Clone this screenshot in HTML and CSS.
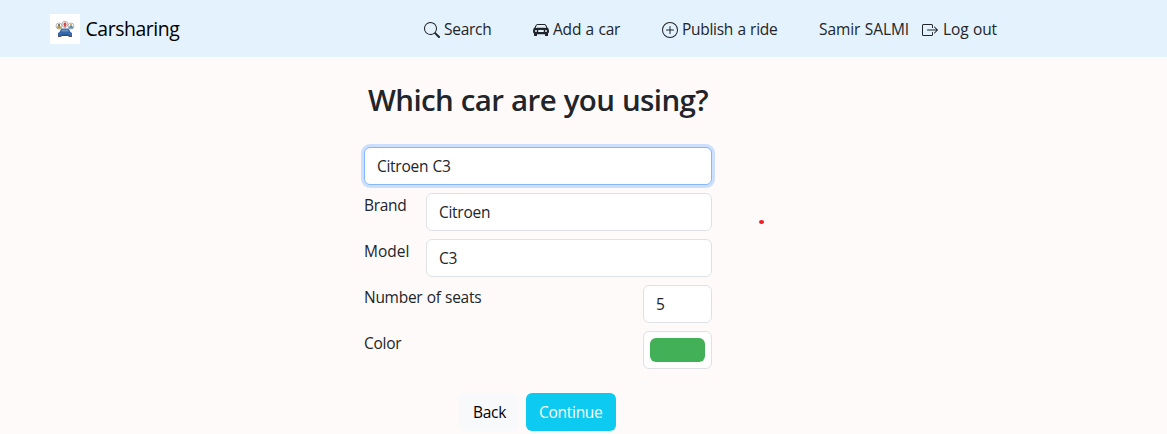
FILE: index.html
```html
<!DOCTYPE html>
<html lang="en">
<head>
<meta charset="utf-8">
<title>Carsharing</title>
<link rel="stylesheet" href="styles.css">
</head>
<body>
<header class="navbar">
  <a class="brand">
    <svg class="logo" viewBox="0 0 30 30">
      <rect width="30" height="30" fill="#fff"/>
      <g fill="#f5f5f5" stroke="#aaa6a4" stroke-width=".8"><circle cx="9" cy="12" r="3"/><circle cx="15" cy="10.200" r="3"/><circle cx="21" cy="12" r="3"/></g>
      <path d="M7 14.500q0-3 2-3t2 3z" fill="#b09a4c"/><circle cx="9" cy="11" r="1" fill="#555"/>
      <path d="M13.500 10h3L15 14.500z" fill="#e24b43"/><circle cx="15" cy="10" r="1.400" fill="#d94640"/>
      <path d="M19 14.500q0-3 2-3t2 3z" fill="#5c8eac"/><circle cx="21" cy="11" r="1" fill="#c59a42"/>
      <path d="M9.500 18l1.800-3.500h7.400l1.800 3.500 1.500 1v3H8v-3z" fill="#3568ac"/>
      <path d="M11.200 17.500l1-2h5.600l1 2z" fill="#6d91b9"/>
      <path d="M11.500 20.500h7V22h-7z" fill="#244c85"/>
      <path d="M8 21.500h3.500V23H8zM18.500 21.500H22V23h-3.500z" fill="#555"/>
    </svg>
    <span class="brand-name">Carsharing</span>
  </a>
  <nav class="nav">
    <a class="item search"><svg class="icon" viewBox="0 0 16 16"><path d="M11.742 10.344a6.500 6.500 0 1 0-1.397 1.398h-.001q.044.06.098.115l3.850 3.850a1 1 0 0 0 1.415-1.414l-3.850-3.850a1 1 0 0 0-.115-.1zM12 6.500a5.500 5.500 0 1 1-11 0 5.500 5.500 0 0 1 11 0"/></svg><span class="t">Search</span></a>
    <a class="item add"><svg class="icon" viewBox="0 0 16 16"><path d="M2.520 3.515A2.500 2.500 0 0 1 4.820 2h6.362c1 0 1.904.596 2.298 1.515l.792 1.848c.075.175.21.319.38.404.5.25.855.715.965 1.262l.335 1.679q.05.242.049.49v.413c0 .814-.39 1.543-1 1.997V13.500a.5.5 0 0 1-.5.5h-2a.5.5 0 0 1-.5-.5v-1.338c-1.292.048-2.745.088-4 .088s-2.708-.04-4-.088V13.500a.5.5 0 0 1-.5.5h-2a.5.5 0 0 1-.5-.5v-1.892c-.61-.454-1-1.183-1-1.997v-.413a2.500 2.500 0 0 1 .049-.49l.335-1.680c.11-.546.465-1.012.964-1.261a.8.8 0 0 0 .381-.404l.792-1.848ZM3 10a1 1 0 1 0 0-2 1 1 0 0 0 0 2m10 0a1 1 0 1 0 0-2 1 1 0 0 0 0 2M6 8a1 1 0 0 0 0 2h4a1 1 0 1 0 0-2zM2.906 5.189a.51.51 0 0 0 .497.731c.91-.073 3.350-.17 4.597-.17s3.688.097 4.597.17a.51.51 0 0 0 .497-.731l-.956-1.913A.5.5 0 0 0 11.691 3H4.309a.5.5 0 0 0-.447.276L2.906 5.190Z"/></svg><span class="t">Add a car</span></a>
    <a class="item publish"><svg class="icon" viewBox="0 0 16 16"><path d="M8 15A7 7 0 1 1 8 1a7 7 0 0 1 0 14m0 1A8 8 0 1 0 8 0a8 8 0 0 0 0 16"/><path d="M8 4a.5.5 0 0 1 .5.5v3h3a.5.5 0 0 1 0 1h-3v3a.5.5 0 0 1-1 0v-3h-3a.5.5 0 0 1 0-1h3v-3A.5.5 0 0 1 8 4"/></svg><span class="t">Publish a ride</span></a>
    <a class="item user"><span class="t">Samir SALMI</span></a>
    <a class="item logout"><svg class="icon" viewBox="0 0 16 16"><path d="M10 12.500a.5.5 0 0 1-.5.5h-8a.5.5 0 0 1-.5-.5v-9a.5.5 0 0 1 .5-.5h8a.5.5 0 0 1 .5.5v2a.5.5 0 0 0 1 0v-2A1.500 1.500 0 0 0 9.500 2h-8A1.500 1.500 0 0 0 0 3.500v9A1.500 1.500 0 0 0 1.500 14h8a1.500 1.500 0 0 0 1.500-1.500v-2a.5.5 0 0 0-1 0z"/><path d="M15.854 8.354a.5.5 0 0 0 0-.708l-3-3a.5.5 0 0 0-.708.708L14.293 7.500H5.500a.5.5 0 0 0 0 1h8.793l-2.147 2.146a.5.5 0 0 0 .708.708z"/></svg><span class="t">Log out</span></a>
  </nav>
</header>
<main class="page">
  <h1 class="title">Which car are you using?</h1>
  <form class="form">
    <div class="field focused">Citroen C3</div>
    <div class="row"><span class="label">Brand</span><div class="field wide">Citroen</div></div>
    <div class="row"><span class="label model">Model</span><div class="field wide">C3</div></div>
    <div class="row"><span class="label">Number of seats</span><div class="field small">5</div></div>
    <div class="row"><span class="label">Color</span><div class="field small color"><span class="swatch"></span></div></div>
    <div class="actions"><a class="btn back">Back</a><a class="btn continue">Continue</a></div>
  </form>
  <span class="dot"></span>
</main>
</body>
</html>
```
FILE: styles.css
```css
* { box-sizing: border-box; }
body {
  margin: 0;
  height: 434px;
  overflow: hidden;
  background: #fffafa;
  color: #212529;
  font: 15.5px/24px "Open Sans", "Noto Sans", sans-serif;
  letter-spacing: -0.28px;
  word-spacing: 0.6px;
  white-space: nowrap;
}
.navbar { display: flex; height: 57px; padding-left: 50px; background: #e3f2fd; }
.brand { display: flex; align-items: center; gap: 5.5px; width: 374px; color: #000; }
.logo { width: 30px; height: 30px; }
.brand-name { font-size: 19.4px; letter-spacing: -0.42px; }
.nav { display: flex; align-items: center; }
.item { display: flex; align-items: center; gap: 4px; }
.icon { width: 16px; height: 16px; fill: currentColor; position: relative; top: 1px; }
.search { width: 109px; }
.add { width: 129px; letter-spacing: -0.2px; }
.publish { width: 157px; }
.user { width: 103px; letter-spacing: -0.08px; }
.logout { gap: 5px; letter-spacing: -0.12px; }
.page { position: relative; }
.title {
  margin: 0;
  padding: 24px 0 0 368px;
  font-size: 29.5px;
  line-height: 38px;
  font-weight: 600;
  letter-spacing: -0.62px;
  word-spacing: 0.6px;
}
.form { display: flex; flex-direction: column; gap: 8px; width: 348px; margin: 28px 0 0 364px; }
.row { display: flex; justify-content: space-between; }
.model { letter-spacing: 0; }
.field {
  height: 38px;
  padding: 6px 12px;
  border: 1px solid #dee2e6;
  border-radius: 6px;
  background: #fff;
}
.focused { border-color: #86b7fe; box-shadow: 0 0 0 3px #cddffe; }
.wide { width: 286px; }
.small { width: 69px; }
.color { padding: 6px; }
.swatch { display: block; width: 55px; height: 24px; border-radius: 6px; background: #41b057; }
.actions { display: flex; gap: 8px; margin: 16px 0 0 95px; }
.btn { height: 38px; padding: 7px 13px; border-radius: 6px; }
.back { width: 59px; padding-left: 14px; background: #f8f9fa; color: #000; }
.continue { width: 90px; background: #0dcaf0; color: #fff; }
.dot { position: absolute; left: 759px; top: 163px; width: 5px; height: 4px; border-radius: 50%; background: #ed1c24; }
```
